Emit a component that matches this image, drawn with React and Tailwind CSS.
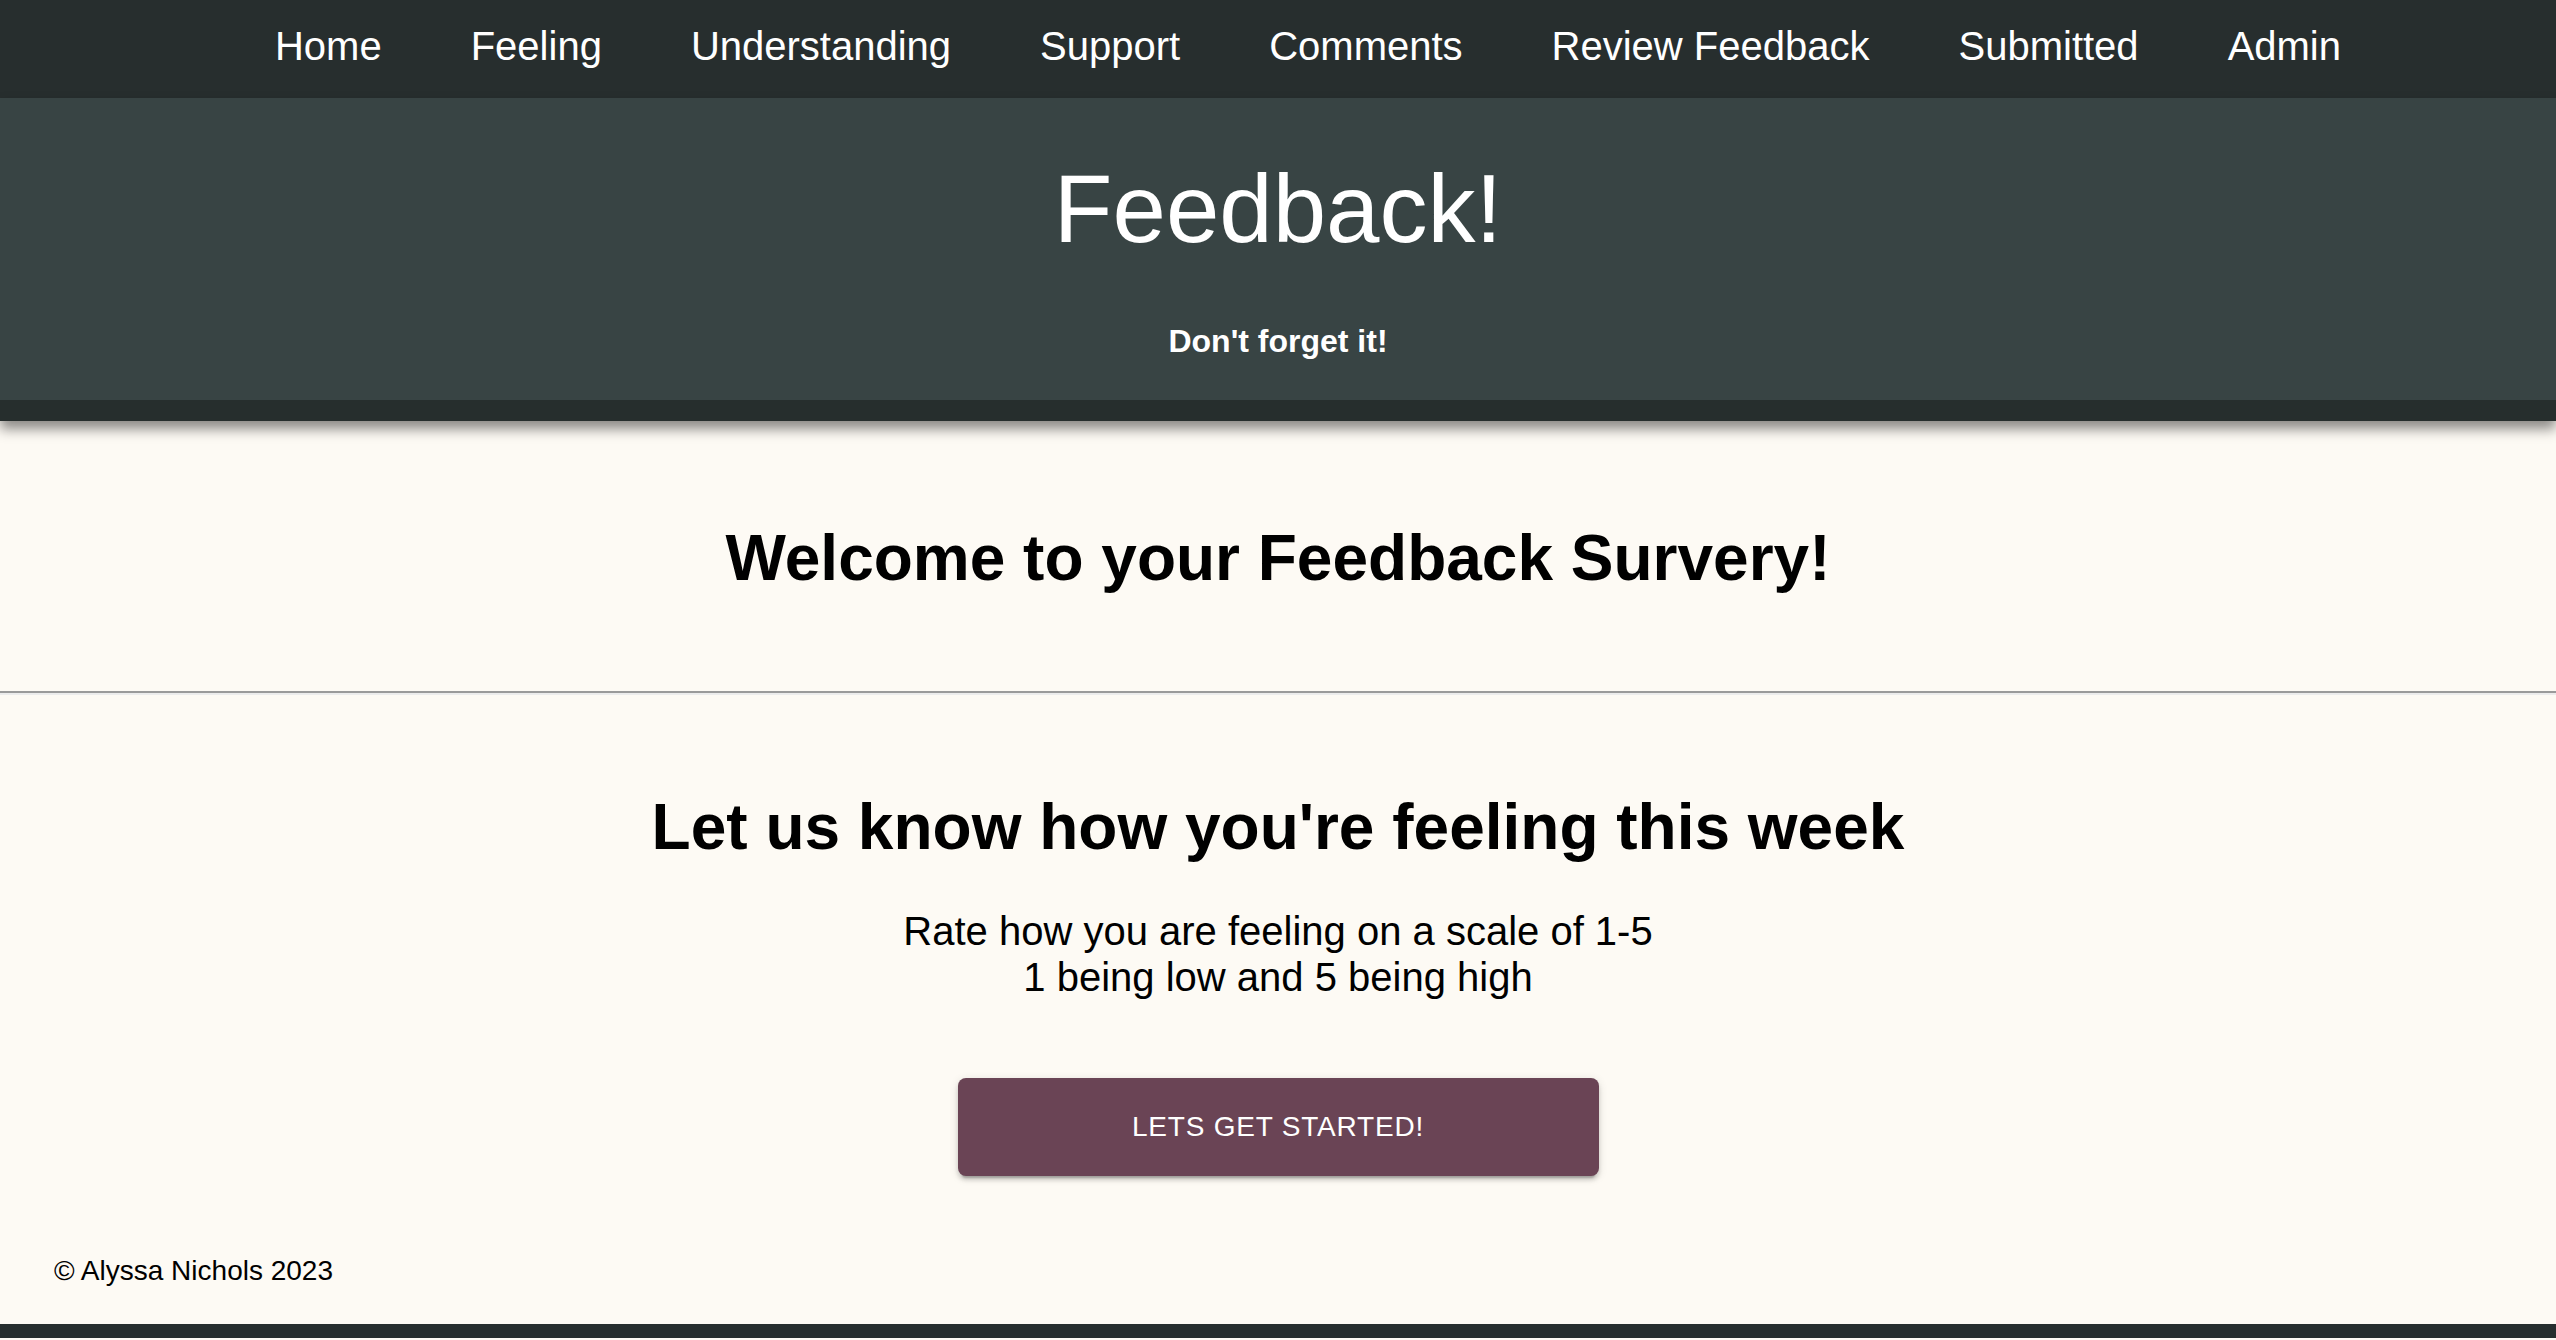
import React from "react";

const links = ["Home", "Feeling", "Understanding", "Support", "Comments", "Review Feedback", "Submitted", "Admin"];

const App = () => {
    return (
        <div className="min-h-screen bg-[#fdfaf4] font-['Liberation_Sans',Arial,Helvetica,sans-serif] flex flex-col text-black">
            <nav className="h-[98px] bg-[#272e2e] flex justify-center gap-[89px] pl-[60px] pt-[26px]">
                {links.map((l) => (
                    <a key={l} href="#" className="text-[40px] leading-none text-white">{l}</a>
                ))}
            </nav>

            <header className="relative z-10 bg-[#384444] border-b-[21px] border-[#262e2d] shadow-[0_8px_12px_rgba(0,0,0,0.45)] pt-[63px] pb-[43px] flex flex-col items-center text-white">
                <h1 className="text-[96px] leading-none font-normal">Feedback!</h1>
                <p className="mt-[68px] text-[32px] leading-none font-bold">Don't forget it!</p>
            </header>

            <h2 className="mt-[105px] text-[64px] leading-none font-bold text-center">Welcome to your Feedback Survery!</h2>

            <hr className="mt-[101px] border-0 border-t-2 border-b-2 border-t-[#9a9a9a] border-b-[#ececec]" />

            <div className="flex flex-col items-center">
                <h2 className="mt-[100px] text-[64px] leading-none font-bold text-center">Let us know how you're feeling this week</h2>
                <p className="mt-[49px] text-[40px] leading-[46px] text-center">
                    Rate how you are feeling on a scale of 1-5
                    <br />
                    1 being low and 5 being high
                </p>
                <button className="mt-[78px] w-[641px] h-[98px] rounded-[8px] bg-[#6a4455] text-white text-[28px] tracking-[0.8px] uppercase shadow-[0_6px_2px_-4px_rgba(0,0,0,0.2),0_4px_4px_0_rgba(0,0,0,0.14),0_2px_10px_0_rgba(0,0,0,0.12)]">
                    Lets get started!
                </button>
            </div>

            <footer className="mt-[81px] pl-[54px] text-[28px] leading-none">© Alyssa Nichols 2023</footer>

            <div className="mt-[39px] h-[14px] bg-[#262e2e]" />
        </div>
    );
};

export default App;
